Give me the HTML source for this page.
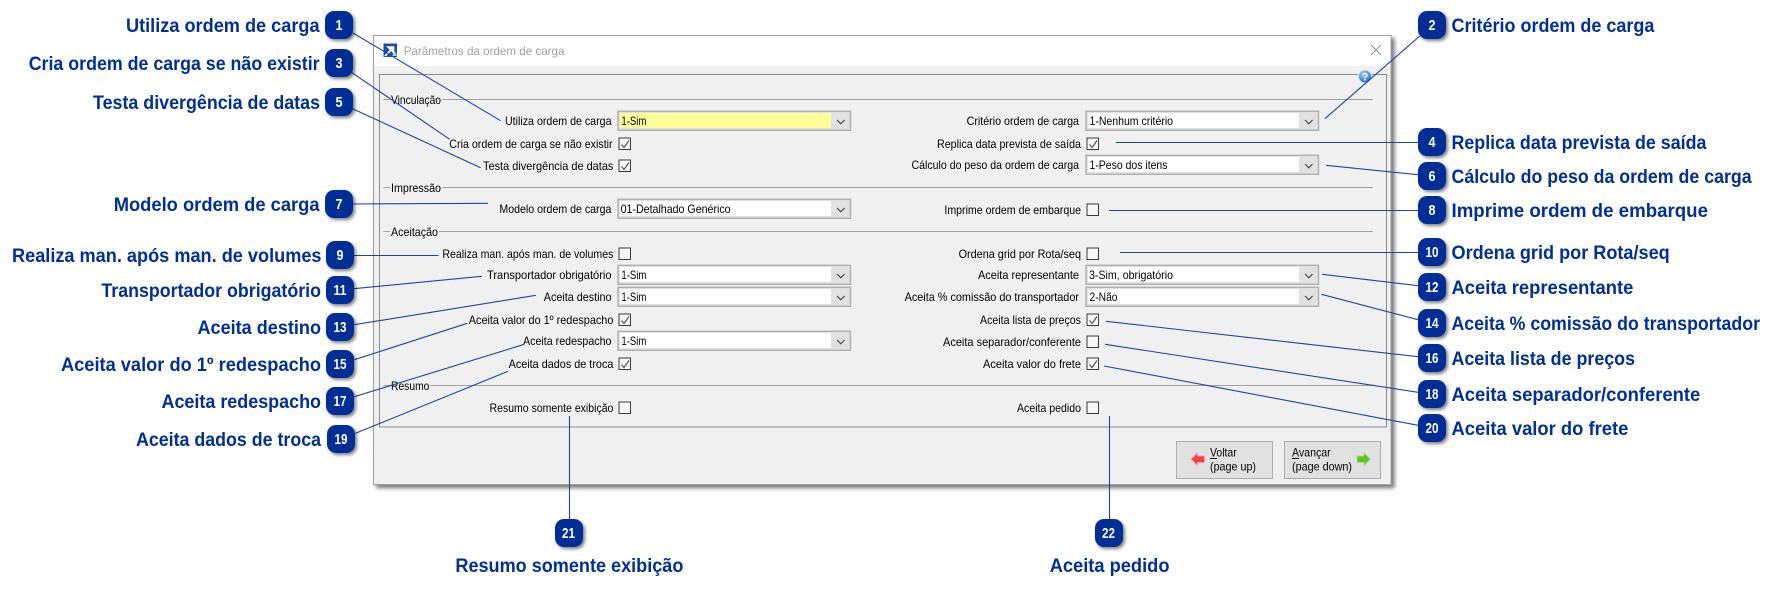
<!DOCTYPE html>
<html lang="pt"><head><meta charset="utf-8"><title>Parâmetros da ordem de carga</title>
<style>
html,body{margin:0;padding:0;background:#fff;width:1776px;height:594px;overflow:hidden}
svg{display:block}
text{font-family:"Liberation Sans",sans-serif}
.h{font-size:19.5px;font-weight:700;fill:#002f96}
.l{font-size:12px;fill:#000}
.n{font-size:15px;font-weight:700;fill:#fff}
.b{fill:#002f96}
.s{fill:#e1e1e1;stroke:#b0b0b0;stroke-width:1.4}
.w{fill:#fff}
.c{fill:#f7f7f7;stroke:#3a3a3a;stroke-width:1}
.sec{stroke:#a3a3a3;stroke-width:1;fill:none}
.cn{stroke:#1b46a6;stroke-width:1.1;fill:none}
.bt{fill:#e1e1e1;stroke:#adadad;stroke-width:1}
</style></head><body>
<svg xmlns="http://www.w3.org/2000/svg" width="1776" height="594" viewBox="0 0 1776 594">
<defs>
<filter id="ws" x="-2%" y="-3%" width="104%" height="108%"><feDropShadow dx="3" dy="3" stdDeviation="2" flood-color="#000" flood-opacity=".55"/></filter>
<filter id="bs" x="-30%" y="-30%" width="170%" height="170%"><feDropShadow dx="2" dy="2" stdDeviation="1.6" flood-color="#000" flood-opacity=".5"/></filter>
<radialGradient id="hg" cx=".4" cy=".3" r=".8"><stop offset="0" stop-color="#9fd0f5"/><stop offset=".6" stop-color="#3f8fdc"/><stop offset="1" stop-color="#1b5fb0"/></radialGradient>
</defs>

<!-- window -->
<rect x="373.5" y="35.5" width="1017.5" height="449" fill="#f0f0f0" stroke="#a0a0a0" stroke-width="1" filter="url(#ws)"/>
<rect x="374" y="36" width="1016.5" height="30" fill="#fff"/>
<rect x="379.5" y="74.5" width="1007" height="352.5" fill="#f0f0f0" stroke="#8c8c8c" stroke-width="1"/>

<!-- title -->
<rect x="383.5" y="43.5" width="13.5" height="13.5" fill="#1d4f9e"/>
<path d="M385 56l6-6 M388 47h5.5v5.5z" stroke="#fff" stroke-width="1.6" fill="#fff"/>
<path d="M392 56l3-5 2 5z" fill="#b9cbe6"/>
<text class="l" x="403.7" y="55" textLength="160.8" lengthAdjust="spacingAndGlyphs" style="fill:#a2a2a2">Parâmetros da ordem de carga</text>
<path d="M1371 45l10 10M1381 45l-10 10" stroke="#8c8c8c" stroke-width="1" fill="none"/>

<!-- help -->
<circle cx="1365" cy="76.5" r="6.5" fill="url(#hg)" stroke="#d7e4ef" stroke-width="1"/>
<text x="1365" y="80.5" text-anchor="middle" font-size="11" font-weight="700" fill="#fff">?</text>

<!-- section lines -->
<path class="sec" d="M383.5 99.5H1373M383.5 187.5H1373M383.5 231.5H1373M383.5 385.5H1373"/>
<rect x="390" y="93" width="52" height="13" fill="#f0f0f0"/>
<rect x="390" y="181" width="52" height="13" fill="#f0f0f0"/>
<rect x="390" y="225" width="49" height="13" fill="#f0f0f0"/>
<rect x="390" y="379" width="40" height="13" fill="#f0f0f0"/>
<text class="l" x="391" y="104" textLength="50" lengthAdjust="spacingAndGlyphs">Vinculação</text>
<text class="l" x="391" y="192" textLength="50" lengthAdjust="spacingAndGlyphs">Impressão</text>
<text class="l" x="391" y="236" textLength="47" lengthAdjust="spacingAndGlyphs">Aceitação</text>
<text class="l" x="391" y="390" textLength="38.4" lengthAdjust="spacingAndGlyphs">Resumo</text>

<!-- selects left -->
<rect class="s" x="618" y="111.3" width="232.5" height="19"/><rect x="620" y="113" width="211" height="15" fill="#ffff99"/>
<rect class="s" x="618" y="199.3" width="232.5" height="19"/><rect class="w" x="620" y="201" width="211" height="15"/>
<rect class="s" x="618" y="265.3" width="232.5" height="19"/><rect class="w" x="620" y="267" width="211" height="15"/>
<rect class="s" x="618" y="287.3" width="232.5" height="19"/><rect class="w" x="620" y="289" width="211" height="15"/>
<rect class="s" x="618" y="331.3" width="232.5" height="19"/><rect class="w" x="620" y="333" width="211" height="15"/>
<!-- selects right -->
<rect class="s" x="1086" y="111.3" width="232.5" height="19"/><rect class="w" x="1088" y="113" width="211" height="15"/>
<rect class="s" x="1086" y="155.3" width="232.5" height="19"/><rect class="w" x="1088" y="157" width="211" height="15"/>
<rect class="s" x="1086" y="265.3" width="232.5" height="19"/><rect class="w" x="1088" y="267" width="211" height="15"/>
<rect class="s" x="1086" y="287.3" width="232.5" height="19"/><rect class="w" x="1088" y="289" width="211" height="15"/>
<!-- chevrons -->
<path fill="none" stroke="#4a4a4a" stroke-width="1.2" d="M837 120l3.8 3.8 3.8-3.8M837 208l3.8 3.8 3.8-3.8M837 274l3.8 3.8 3.8-3.8M837 296l3.8 3.8 3.8-3.8M837 340l3.8 3.8 3.8-3.8M1305 120l3.8 3.8 3.8-3.8M1305 164l3.8 3.8 3.8-3.8M1305 274l3.8 3.8 3.8-3.8M1305 296l3.8 3.8 3.8-3.8"/>

<!-- select text -->
<text class="l" x="621.4" y="125" textLength="25" lengthAdjust="spacingAndGlyphs">1-Sim</text>
<text class="l" x="620.6" y="213" textLength="110" lengthAdjust="spacingAndGlyphs">01-Detalhado Genérico</text>
<text class="l" x="621.4" y="279" textLength="25" lengthAdjust="spacingAndGlyphs">1-Sim</text>
<text class="l" x="621.4" y="301" textLength="25" lengthAdjust="spacingAndGlyphs">1-Sim</text>
<text class="l" x="621.4" y="345" textLength="25" lengthAdjust="spacingAndGlyphs">1-Sim</text>
<text class="l" x="1089.5" y="125" textLength="83.5" lengthAdjust="spacingAndGlyphs">1-Nenhum critério</text>
<text class="l" x="1089.5" y="169" textLength="78" lengthAdjust="spacingAndGlyphs">1-Peso dos itens</text>
<text class="l" x="1089" y="279" textLength="84" lengthAdjust="spacingAndGlyphs">3-Sim, obrigatório</text>
<text class="l" x="1089.5" y="301" textLength="28" lengthAdjust="spacingAndGlyphs">2-Não</text>

<!-- checkboxes -->
<rect class="c" x="619" y="138" width="11.5" height="11.5"/>
<rect class="c" x="619" y="160" width="11.5" height="11.5"/>
<rect class="c" x="619" y="248" width="11.5" height="11.5"/>
<rect class="c" x="619" y="314" width="11.5" height="11.5"/>
<rect class="c" x="619" y="358" width="11.5" height="11.5"/>
<rect class="c" x="619" y="402" width="11.5" height="11.5"/>
<rect class="c" x="1087" y="138" width="11.5" height="11.5"/>
<rect class="c" x="1087" y="204" width="11.5" height="11.5"/>
<rect class="c" x="1087" y="248" width="11.5" height="11.5"/>
<rect class="c" x="1087" y="314" width="11.5" height="11.5"/>
<rect class="c" x="1087" y="336" width="11.5" height="11.5"/>
<rect class="c" x="1087" y="358" width="11.5" height="11.5"/>
<rect class="c" x="1087" y="402" width="11.5" height="11.5"/>
<path fill="none" stroke="#555" stroke-width="1.2" d="M621.5 144.5l2.5 3 5-7M621.5 166.5l2.5 3 5-7M621.5 320.5l2.5 3 5-7M621.5 364.5l2.5 3 5-7M1089.5 144.5l2.5 3 5-7M1089.5 320.5l2.5 3 5-7M1089.5 364.5l2.5 3 5-7"/>

<!-- labels left -->
<text class="l" x="505" y="125" textLength="106.5" lengthAdjust="spacingAndGlyphs">Utiliza ordem de carga</text>
<text class="l" x="449.3" y="148" textLength="163.3" lengthAdjust="spacingAndGlyphs">Cria ordem de carga se não existir</text>
<text class="l" x="483" y="170" textLength="130.4" lengthAdjust="spacingAndGlyphs">Testa divergência de datas</text>
<text class="l" x="499.4" y="213" textLength="112" lengthAdjust="spacingAndGlyphs">Modelo ordem de carga</text>
<text class="l" x="442.4" y="258" textLength="171" lengthAdjust="spacingAndGlyphs">Realiza man. após man. de volumes</text>
<text class="l" x="487" y="279" textLength="124.5" lengthAdjust="spacingAndGlyphs">Transportador obrigatório</text>
<text class="l" x="543.8" y="301" textLength="67.7" lengthAdjust="spacingAndGlyphs">Aceita destino</text>
<text class="l" x="468.8" y="324" textLength="144.6" lengthAdjust="spacingAndGlyphs">Aceita valor do 1º redespacho</text>
<text class="l" x="523" y="345" textLength="88.5" lengthAdjust="spacingAndGlyphs">Aceita redespacho</text>
<text class="l" x="508.6" y="368" textLength="104.8" lengthAdjust="spacingAndGlyphs">Aceita dados de troca</text>
<text class="l" x="489.5" y="412" textLength="123.9" lengthAdjust="spacingAndGlyphs">Resumo somente exibição</text>

<!-- labels right -->
<text class="l" x="966.6" y="125" textLength="112.4" lengthAdjust="spacingAndGlyphs">Critério ordem de carga</text>
<text class="l" x="937" y="148" textLength="144" lengthAdjust="spacingAndGlyphs">Replica data prevista de saída</text>
<text class="l" x="911.5" y="169" textLength="167.5" lengthAdjust="spacingAndGlyphs">Cálculo do peso da ordem de carga</text>
<text class="l" x="944.4" y="214" textLength="136.6" lengthAdjust="spacingAndGlyphs">Imprime ordem de embarque</text>
<text class="l" x="958.6" y="258" textLength="122.4" lengthAdjust="spacingAndGlyphs">Ordena grid por Rota/seq</text>
<text class="l" x="978" y="279" textLength="101" lengthAdjust="spacingAndGlyphs">Aceita representante</text>
<text class="l" x="904.6" y="301" textLength="174.4" lengthAdjust="spacingAndGlyphs">Aceita % comissão do transportador</text>
<text class="l" x="980" y="324" textLength="101" lengthAdjust="spacingAndGlyphs">Aceita lista de preços</text>
<text class="l" x="943" y="346" textLength="138" lengthAdjust="spacingAndGlyphs">Aceita separador/conferente</text>
<text class="l" x="983" y="368" textLength="98" lengthAdjust="spacingAndGlyphs">Aceita valor do frete</text>
<text class="l" x="1017" y="412" textLength="64" lengthAdjust="spacingAndGlyphs">Aceita pedido</text>

<!-- buttons -->
<rect class="bt" x="1176.5" y="441.5" width="96" height="37"/>
<rect class="bt" x="1284.5" y="441.5" width="96" height="37"/>
<path d="M1191 459l6.5-6v3h7v6.5h-7v3z" fill="#f4404a" stroke="#f9a0a5" stroke-width=".8"/>
<path d="M1370.5 459l-6.5-6v3h-7v6.5h7v3z" fill="#62c22e" stroke="#a8e088" stroke-width=".8"/>
<text class="l" x="1210" y="456.5" textLength="26.7" lengthAdjust="spacingAndGlyphs">Voltar</text>
<text class="l" x="1210" y="470.5" textLength="46" lengthAdjust="spacingAndGlyphs">(page up)</text>
<path d="M1210 458.5h7M1292 458.5h7" stroke="#111" stroke-width="1"/>
<text class="l" x="1292" y="456.5" textLength="38.7" lengthAdjust="spacingAndGlyphs">Avançar</text>
<text class="l" x="1292" y="470.5" textLength="60" lengthAdjust="spacingAndGlyphs">(page down)</text>

<!-- connectors -->
<path class="cn" d="M353 33L500.6 120.7M352 72.7L449.7 139.3M352.5 108.7L480.7 167.7M353 204L488 203.3M354 255.5H438.6M354 288.7L481.8 276.3M354.4 324.7L535.8 295.3M354.4 359.7L467.3 323.3M354.4 396.7L523 344.7M355.5 433.3L508 371.3M569.5 416V519M1109.5 416V519M1419.8 36L1324.9 118.7M1115.9 142.5H1418M1326 165.3L1418 174.7M1109 210.5H1418M1120 252.5H1418M1322.2 274.3L1418 285.7M1321.4 294.3L1418 319.7M1106 321.3L1418 356.7M1105 344.3L1418 392.3M1104 366L1418 425.3"/>

<!-- badges -->
<g filter="url(#bs)">
<rect class="b" x="325" y="11" width="28" height="28" rx="9"/>
<rect class="b" x="325" y="49" width="28" height="28" rx="9"/>
<rect class="b" x="325" y="88" width="28" height="28" rx="9"/>
<rect class="b" x="325" y="190" width="28" height="28" rx="9"/>
<rect class="b" x="326" y="241" width="28" height="28" rx="9"/>
<rect class="b" x="326" y="276" width="28" height="28" rx="9"/>
<rect class="b" x="326" y="313" width="28" height="28" rx="9"/>
<rect class="b" x="326" y="350" width="28" height="28" rx="9"/>
<rect class="b" x="326" y="387" width="28" height="28" rx="9"/>
<rect class="b" x="327" y="425" width="28" height="28" rx="9"/>
<rect class="b" x="555" y="519" width="28" height="28" rx="9"/>
<rect class="b" x="1095" y="519" width="28" height="28" rx="9"/>
<rect class="b" x="1418" y="11" width="28" height="28" rx="9"/>
<rect class="b" x="1418" y="128" width="28" height="28" rx="9"/>
<rect class="b" x="1418" y="162" width="28" height="28" rx="9"/>
<rect class="b" x="1418" y="196" width="28" height="28" rx="9"/>
<rect class="b" x="1418" y="238" width="28" height="28" rx="9"/>
<rect class="b" x="1418" y="273" width="28" height="28" rx="9"/>
<rect class="b" x="1418" y="309" width="28" height="28" rx="9"/>
<rect class="b" x="1418" y="344" width="28" height="28" rx="9"/>
<rect class="b" x="1418" y="380" width="28" height="28" rx="9"/>
<rect class="b" x="1418" y="414" width="28" height="28" rx="9"/>
</g>
<text class="n" x="335.5" y="30" textLength="7" lengthAdjust="spacingAndGlyphs">1</text>
<text class="n" x="335.5" y="68" textLength="7" lengthAdjust="spacingAndGlyphs">3</text>
<text class="n" x="335.5" y="107" textLength="7" lengthAdjust="spacingAndGlyphs">5</text>
<text class="n" x="335.5" y="209" textLength="7" lengthAdjust="spacingAndGlyphs">7</text>
<text class="n" x="336.5" y="260" textLength="7" lengthAdjust="spacingAndGlyphs">9</text>
<text class="n" x="333.5" y="295" textLength="13" lengthAdjust="spacingAndGlyphs">11</text>
<text class="n" x="333.5" y="332" textLength="13" lengthAdjust="spacingAndGlyphs">13</text>
<text class="n" x="333.5" y="369" textLength="13" lengthAdjust="spacingAndGlyphs">15</text>
<text class="n" x="333.5" y="406" textLength="13" lengthAdjust="spacingAndGlyphs">17</text>
<text class="n" x="334.5" y="444" textLength="13" lengthAdjust="spacingAndGlyphs">19</text>
<text class="n" x="562" y="538" textLength="13" lengthAdjust="spacingAndGlyphs">21</text>
<text class="n" x="1102" y="538" textLength="13" lengthAdjust="spacingAndGlyphs">22</text>
<text class="n" x="1428.5" y="30" textLength="7" lengthAdjust="spacingAndGlyphs">2</text>
<text class="n" x="1428.5" y="147" textLength="7" lengthAdjust="spacingAndGlyphs">4</text>
<text class="n" x="1428.5" y="181" textLength="7" lengthAdjust="spacingAndGlyphs">6</text>
<text class="n" x="1428.5" y="215" textLength="7" lengthAdjust="spacingAndGlyphs">8</text>
<text class="n" x="1425.5" y="257" textLength="13" lengthAdjust="spacingAndGlyphs">10</text>
<text class="n" x="1425.5" y="292" textLength="13" lengthAdjust="spacingAndGlyphs">12</text>
<text class="n" x="1425.5" y="328" textLength="13" lengthAdjust="spacingAndGlyphs">14</text>
<text class="n" x="1425.5" y="363" textLength="13" lengthAdjust="spacingAndGlyphs">16</text>
<text class="n" x="1425.5" y="399" textLength="13" lengthAdjust="spacingAndGlyphs">18</text>
<text class="n" x="1425.5" y="433" textLength="13" lengthAdjust="spacingAndGlyphs">20</text>

<!-- headings left -->
<text class="h" x="126" y="32" textLength="193.6" lengthAdjust="spacingAndGlyphs">Utiliza ordem de carga</text>
<text class="h" x="28.7" y="70" textLength="290.9" lengthAdjust="spacingAndGlyphs">Cria ordem de carga se não existir</text>
<text class="h" x="93" y="109" textLength="227" lengthAdjust="spacingAndGlyphs">Testa divergência de datas</text>
<text class="h" x="113.7" y="211" textLength="205.9" lengthAdjust="spacingAndGlyphs">Modelo ordem de carga</text>
<text class="h" x="12" y="262" textLength="309.5" lengthAdjust="spacingAndGlyphs">Realiza man. após man. de volumes</text>
<text class="h" x="101.4" y="297" textLength="219.6" lengthAdjust="spacingAndGlyphs">Transportador obrigatório</text>
<text class="h" x="197.5" y="334" textLength="123.5" lengthAdjust="spacingAndGlyphs">Aceita destino</text>
<text class="h" x="61" y="371" textLength="260" lengthAdjust="spacingAndGlyphs">Aceita valor do 1º redespacho</text>
<text class="h" x="161.5" y="408" textLength="159.5" lengthAdjust="spacingAndGlyphs">Aceita redespacho</text>
<text class="h" x="136" y="446" textLength="185" lengthAdjust="spacingAndGlyphs">Aceita dados de troca</text>
<!-- headings bottom -->
<text class="h" x="455.4" y="572" textLength="228" lengthAdjust="spacingAndGlyphs">Resumo somente exibição</text>
<text class="h" x="1049.7" y="572" textLength="119.8" lengthAdjust="spacingAndGlyphs">Aceita pedido</text>
<!-- headings right -->
<text class="h" x="1451.5" y="32" textLength="202.9" lengthAdjust="spacingAndGlyphs">Critério ordem de carga</text>
<text class="h" x="1451.5" y="149" textLength="254.9" lengthAdjust="spacingAndGlyphs">Replica data prevista de saída</text>
<text class="h" x="1451.5" y="183" textLength="300.1" lengthAdjust="spacingAndGlyphs">Cálculo do peso da ordem de carga</text>
<text class="h" x="1451.5" y="217" textLength="256.5" lengthAdjust="spacingAndGlyphs">Imprime ordem de embarque</text>
<text class="h" x="1451.5" y="259" textLength="218.2" lengthAdjust="spacingAndGlyphs">Ordena grid por Rota/seq</text>
<text class="h" x="1451.5" y="294" textLength="181.8" lengthAdjust="spacingAndGlyphs">Aceita representante</text>
<text class="h" x="1451.5" y="330" textLength="308.5" lengthAdjust="spacingAndGlyphs">Aceita % comissão do transportador</text>
<text class="h" x="1451.5" y="365" textLength="183.5" lengthAdjust="spacingAndGlyphs">Aceita lista de preços</text>
<text class="h" x="1451.5" y="401" textLength="248.8" lengthAdjust="spacingAndGlyphs">Aceita separador/conferente</text>
<text class="h" x="1451.5" y="435" textLength="176.9" lengthAdjust="spacingAndGlyphs">Aceita valor do frete</text>
</svg>
</body></html>
